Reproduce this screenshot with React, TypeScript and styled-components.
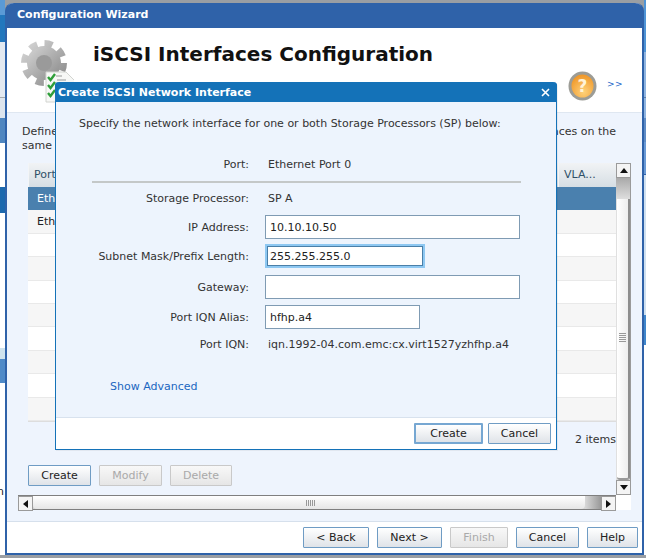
import React from 'react';
import styled, { createGlobalStyle } from 'styled-components';

const GlobalStyle = createGlobalStyle`
  html, body {
    margin: 0;
    padding: 0;
    background: #ffffff;
  }
  * {
    box-sizing: border-box;
  }
`;

const Page = styled.div`
  position: relative;
  width: 646px;
  height: 558px;
  overflow: hidden;
  display: flex;
  background: #9a9ea3;
  font-family: 'DejaVu Sans', Verdana, sans-serif;
  font-size: 11px;
  color: #333333;
`;

const Strip = styled.div<{ $width: number }>`
  width: ${(p) => p.$width}px;
  flex: none;
  height: 555px;
  display: flex;
  flex-direction: column;
  background: #ffffff;
`;

const StripBand = styled.div<{ $height: number; $color: string }>`
  height: ${(p) => p.$height}px;
  flex: none;
  background: ${(p) => p.$color};
  font-size: 11px;
  line-height: 12px;
  color: #222222;
  overflow: hidden;
  text-indent: -3px;
`;

const Wizard = styled.div`
  width: 639px;
  height: 552px;
  margin-top: 3px;
  flex: none;
  display: flex;
  flex-direction: column;
  background: #ffffff;
  border: 2px solid #2f62a9;
  border-top: none;
  border-radius: 8px 8px 0 0;
`;

const WizardTitle = styled.div`
  height: 25px;
  flex: none;
  margin: 0 -1px;
  padding: 0 11px 2px;
  display: flex;
  align-items: center;
  background: #2f62a9;
  color: #ffffff;
  font-weight: 700;
  border-radius: 8px 8px 0 0;
`;

const Header = styled.div`
  height: 84px;
  flex: none;
  display: flex;
  padding-left: 7px;
  position: relative;
`;

const GearIcon = styled.svg`
  width: 60px;
  height: 70px;
  margin-top: 10px;
  flex: none;
`;

const Heading = styled.h1`
  margin: 12px 0 0 19px;
  font-size: 20px;
  line-height: 28px;
  font-weight: 700;
  color: #111111;
  white-space: nowrap;
`;

const HelpArea = styled.div`
  margin-left: auto;
  padding: 43px 19px 0 0;
  display: flex;
  align-items: flex-start;
  gap: 10px;
`;

const HelpIcon = styled.svg`
  width: 29px;
  height: 30px;
  flex: none;
`;

const MoreLink = styled.span`
  margin-top: 8px;
  color: #1a66c8;
  font-size: 9px;
  letter-spacing: 0.5px;
`;

const Panel = styled.div`
  flex: 1;
  min-height: 0;
  display: flex;
  flex-direction: column;
  padding-left: 11px;
  background: #eef4fd;
  border-top: 1px solid #dfe7f1;
  border-bottom: 1px solid #d6e0ec;
`;

const Description = styled.div`
  height: 50px;
  width: 598px;
  padding: 12px 0 0 4px;
  line-height: 14px;
  white-space: nowrap;
`;

const DescriptionLine = styled.div`
  display: flex;
  justify-content: space-between;
`;

const ScrollFrame = styled.div`
  display: grid;
  grid-template-columns: 598px 15px;
  grid-template-rows: 332px 15px;
`;

const Viewport = styled.div`
  padding-left: 10px;
  display: flex;
  flex-direction: column;
`;

const Grid = styled.div`
  display: flex;
  flex-direction: column;
  border-bottom: 1px solid #dddddd;
`;

const HeaderRow = styled.div`
  height: 24px;
  display: flex;
  align-items: center;
  justify-content: space-between;
  background: linear-gradient(#f1f3f5, #d6dee4);
  color: #2f5068;
`;

const HeaderCell = styled.span<{ $width: number }>`
  width: ${(p) => p.$width}px;
  padding-left: 5px;
  line-height: 24px;
  border-left: 1px solid #f3f5f7;
  white-space: nowrap;
`;

const Row = styled.div<{ $selected?: boolean; $odd: boolean }>`
  height: 23.4px;
  padding-left: 9px;
  display: flex;
  align-items: center;
  background: ${(p) => (p.$selected ? '#4a80ae' : p.$odd ? '#f6f6f6' : '#ffffff')};
  color: ${(p) => (p.$selected ? '#ffffff' : '#222222')};
  border-bottom: 1px solid ${(p) => (p.$selected ? '#4a80ae' : '#e9e9e9')};
`;

const ItemCount = styled.div`
  height: 36px;
  display: flex;
  align-items: center;
  justify-content: flex-end;
  white-space: nowrap;
`;

const Actions = styled.div`
  margin-top: 7px;
  display: flex;
  gap: 8px;
`;

const Button = styled.button<{ $width: number; $focused?: boolean }>`
  width: ${(p) => p.$width}px;
  height: 21px;
  padding: 0;
  flex: none;
  font-family: inherit;
  font-size: 11px;
  color: #222222;
  background: linear-gradient(#ffffff, #dfe3e8);
  border: ${(p) => (p.$focused ? '2px solid #76a7d2' : '1px solid #6f9cc4')};
  border-radius: 1px;

  &:disabled {
    color: #a9a9a9;
    background: linear-gradient(#f8f8f8, #e6e6e6);
    border-color: #c9c9c9;
  }
`;

const VScroll = styled.div`
  display: flex;
  flex-direction: column;
  background: #d4d4d4;
  border-right: 1px solid #9a9a9a;
`;

const ArrowButton = styled.div`
  width: 15px;
  height: 15px;
  flex: none;
  display: flex;
  align-items: center;
  justify-content: center;
  background: #f4f4f4;
  border: 1px solid #9a9a9a;
`;

const VTrack = styled.div`
  flex: 1;
  padding-top: 21px;
  display: flex;
  flex-direction: column;
  background: linear-gradient(#a9a9a9, #e0e0e0 22px);
`;

const VThumb = styled.div`
  flex: 1;
  padding-top: 134px;
  margin-left: 1px;
  display: flex;
  flex-direction: column;
  align-items: center;
  gap: 1px;
  background: linear-gradient(90deg, #ffffff, #eeeeee);
  border-right: 2px solid #8d8d8d;
  border-bottom: 2px solid #9a9a9a;
  border-radius: 0 0 3px 3px;
`;

const GripH = styled.span`
  width: 7px;
  height: 1px;
  background: #999999;
`;

const HScroll = styled.div`
  display: flex;
  background: #d4d4d4;
  border-top: 1px solid #7f7f7f;
  border-bottom: 1px solid #7f7f7f;
`;

const HThumb = styled.div`
  width: 552px;
  flex: none;
  display: flex;
  align-items: center;
  justify-content: flex-end;
  gap: 1px;
  padding-right: 270px;
  background: linear-gradient(#ffffff, #e6e6e6);
  border-radius: 0 0 4px 4px;
`;

const GripV = styled.span`
  width: 1px;
  height: 6px;
  background: #999999;
`;

const HRest = styled.div`
  flex: 1;
  background: linear-gradient(90deg, #d8d8d8, #999999);
`;

const Corner = styled.div`
  background: #ffffff;
`;

const WizardFooter = styled.div`
  height: 31px;
  flex: none;
  display: flex;
  justify-content: flex-end;
  align-items: flex-start;
  gap: 8px;
  padding: 5px 4px 0 0;
`;

const Dialog = styled.div`
  position: absolute;
  left: 55px;
  top: 82px;
  width: 502px;
  height: 368px;
  display: flex;
  flex-direction: column;
  background: #ffffff;
  border: 1px solid #1472b8;
  border-top: none;
  border-radius: 4px 4px 0 0;
  box-shadow: 1px 1px 0 rgba(0, 0, 0, 0.05);
`;

const DialogTitle = styled.div`
  height: 20px;
  flex: none;
  margin: 0 -1px;
  padding: 0 7px 0 3px;
  display: flex;
  align-items: center;
  justify-content: space-between;
  background: #1472b8;
  color: #ffffff;
  font-weight: 700;
  border-radius: 4px 4px 0 0;
`;

const DialogBody = styled.div`
  flex: 1;
  padding-top: 13px;
  display: flex;
  flex-direction: column;
  background: #edf4fd;
  border-bottom: 1px solid #d8e2ee;
`;

const Intro = styled.div`
  height: 18px;
  padding-left: 23px;
  line-height: 18px;
`;

const Divider = styled.div`
  height: 2px;
  width: 429px;
  margin: 8px 0 7px 36px;
  background: #c4c8c8;
`;

const FormRow = styled.div<{ $height: number; $top?: number }>`
  height: ${(p) => p.$height}px;
  margin-top: ${(p) => p.$top ?? 0}px;
  display: flex;
  align-items: center;
`;

const Label = styled.span`
  width: 193px;
  flex: none;
  text-align: right;
  white-space: nowrap;
`;

const Value = styled.span`
  margin-left: 19px;
  white-space: nowrap;
`;

const Field = styled.div<{ $width: number; $focused?: boolean }>`
  width: ${(p) => p.$width}px;
  height: 24px;
  margin-left: 16px;
  padding-left: ${(p) => (p.$focused ? 3 : 4)}px;
  display: flex;
  align-items: center;
  background: #ffffff;
  color: #222222;
  border: ${(p) => (p.$focused ? '2px solid #8ec8f2' : '1px solid #7f9bb3')};
  outline: ${(p) => (p.$focused ? '1px solid #4a7fa8' : 'none')};
  outline-offset: -3px;
`;

const AdvancedLink = styled.a`
  margin: 28px 0 0 54px;
  color: #1a66c0;
  line-height: 14px;
`;

const DialogFooter = styled.div`
  height: 31px;
  flex: none;
  display: flex;
  justify-content: flex-end;
  gap: 5px;
  padding: 5px 5px 0 0;
`;

const Gear = () => (
  <GearIcon viewBox="0 0 60 70">
    <defs>
      <linearGradient id="gearFill" x1="0" y1="0" x2="1" y2="1">
        <stop offset="0" stopColor="#d6d6d6" />
        <stop offset="1" stopColor="#8a8a8a" />
      </linearGradient>
    </defs>
    <circle cx="30" cy="25" r="17" fill="url(#gearFill)" />
    <circle cx="30" cy="25" r="19.5" fill="none" stroke="url(#gearFill)" strokeWidth="7" strokeDasharray="8 7.3" />
    <circle cx="30" cy="25" r="8" fill="#9a9a9a" />
    <path d="M32 34 H52 L61 43 V64 H32 Z" fill="#f7f8f6" stroke="#d2d4d0" />
    <path d="M42 38 H48 M43 42 H52" stroke="#9a9a9a" strokeWidth="1.2" />
    <path d="M34 39 L36.5 42 L41 36 M34 47 L36.5 50 L41 44 M34 55 L36.5 58 L41 52" fill="none" stroke="#2f9e3a" strokeWidth="2.4" />
  </GearIcon>
);

const HelpBadge = () => (
  <HelpIcon viewBox="0 0 29 30">
    <defs>
      <radialGradient id="helpFill" cx="0.55" cy="0.75" r="0.8">
        <stop offset="0" stopColor="#ffd27a" />
        <stop offset="1" stopColor="#ee9222" />
      </radialGradient>
    </defs>
    <ellipse cx="14.5" cy="15" rx="14" ry="14.5" fill="#9c9c96" />
    <ellipse cx="14.5" cy="15" rx="11" ry="11.5" fill="url(#helpFill)" />
    <text x="14.5" y="21" textAnchor="middle" fontSize="17" fontWeight="700" fill="#fff3d8" fontFamily="'DejaVu Sans', sans-serif">
      ?
    </text>
  </HelpIcon>
);

const Arrow = ({ dir }: { dir: 'up' | 'down' | 'left' | 'right' }) => {
  const points = {
    up: '4,1 8,6 0,6',
    down: '0,1 8,1 4,6',
    left: '6,0 6,8 1,4',
    right: '1,0 6,4 1,8',
  }[dir];
  return (
    <svg width="8" height="8" viewBox="0 0 8 8">
      <polygon points={points} fill="#111111" />
    </svg>
  );
};

const leftBands: [number, string][] = [
  [15, '#5a9ad6'],
  [27, '#2277bd'],
  [55, '#e3e9f1'],
  [1, '#a5a9ad'],
  [20, '#dde5ee'],
  [25, '#4f86c0'],
  [44, '#ffffff'],
  [26, '#1c69ae'],
  [135, '#ffffff'],
  [11, '#cfe3ee'],
  [24, '#4f8ac8'],
];

const rightBands: [number, string][] = [
  [52, '#4f94d6'],
  [45, '#8fb4e0'],
  [1, '#5e7fa8'],
  [20, '#8fb4e0'],
  [24, '#5f8cc6'],
  [32, '#6a9ad6'],
  [1, '#2f62a9'],
  [140, '#cfe0f0'],
  [30, '#3f86cc'],
  [210, '#ffffff'],
];

const rowCount = 10;

const App = () => {
  return (
    <>
      <GlobalStyle />
      <Page>
        <Strip $width={5}>
          {leftBands.map(([height, color], idx) => (
            <StripBand key={`l${idx}`} $height={height} $color={color} />
          ))}
          <StripBand $height={103} $color="#ffffff" />
          <StripBand $height={14} $color="#ffffff">
            n
          </StripBand>
        </Strip>
        <Wizard>
          <WizardTitle>Configuration Wizard</WizardTitle>
          <Header>
            <Gear />
            <Heading>iSCSI Interfaces Configuration</Heading>
            <HelpArea>
              <HelpBadge />
              <MoreLink>&gt;&gt;</MoreLink>
            </HelpArea>
          </Header>
          <Panel>
            <Description>
              <DescriptionLine>
                <span>Define iSCSI network interfaces.</span>
                <span>Configure interfaces on the</span>
              </DescriptionLine>
              same subnet.
            </Description>
            <ScrollFrame>
              <Viewport>
                <Grid>
                  <HeaderRow>
                    <HeaderCell $width={200}>Port</HeaderCell>
                    <HeaderCell $width={58}>VLA...</HeaderCell>
                  </HeaderRow>
                  {Array.from({ length: rowCount }).map((_, idx) => (
                    <Row key={`row${idx}`} $selected={idx === 0} $odd={idx % 2 === 1}>
                      {idx === 0 && 'Ethernet Port 0'}
                      {idx === 1 && 'Ethernet Port 1'}
                    </Row>
                  ))}
                </Grid>
                <ItemCount>2 items</ItemCount>
                <Actions>
                  <Button $width={63}>Create</Button>
                  <Button $width={63} disabled>
                    Modify
                  </Button>
                  <Button $width={62} disabled>
                    Delete
                  </Button>
                </Actions>
              </Viewport>
              <VScroll>
                <ArrowButton>
                  <Arrow dir="up" />
                </ArrowButton>
                <VTrack>
                  <VThumb>
                    <GripH />
                    <GripH />
                    <GripH />
                    <GripH />
                    <GripH />
                  </VThumb>
                </VTrack>
                <ArrowButton>
                  <Arrow dir="down" />
                </ArrowButton>
              </VScroll>
              <HScroll>
                <ArrowButton>
                  <Arrow dir="left" />
                </ArrowButton>
                <HThumb>
                  <GripV />
                  <GripV />
                  <GripV />
                  <GripV />
                  <GripV />
                </HThumb>
                <HRest />
                <ArrowButton>
                  <Arrow dir="right" />
                </ArrowButton>
              </HScroll>
              <Corner />
            </ScrollFrame>
          </Panel>
          <WizardFooter>
            <Button $width={66}>&lt; Back</Button>
            <Button $width={65}>Next &gt;</Button>
            <Button $width={58} disabled>
              Finish
            </Button>
            <Button $width={63}>Cancel</Button>
            <Button $width={51}>Help</Button>
          </WizardFooter>
        </Wizard>
        <Strip $width={2}>
          {rightBands.map(([height, color], idx) => (
            <StripBand key={`r${idx}`} $height={height} $color={color} />
          ))}
        </Strip>
        <Dialog>
          <DialogTitle>
            <span>Create iSCSI Network Interface</span>
            <svg width="9" height="9" viewBox="0 0 9 9">
              <path d="M1 1 L8 8 M8 1 L1 8" stroke="#ffffff" strokeWidth="1.6" />
            </svg>
          </DialogTitle>
          <DialogBody>
            <Intro>Specify the network interface for one or both Storage Processors (SP) below:</Intro>
            <FormRow $height={18} $top={22}>
              <Label>Port:</Label>
              <Value>Ethernet Port 0</Value>
            </FormRow>
            <Divider />
            <FormRow $height={16}>
              <Label>Storage Processor:</Label>
              <Value>SP A</Value>
            </FormRow>
            <FormRow $height={24} $top={9}>
              <Label>IP Address:</Label>
              <Field $width={255}>10.10.10.50</Field>
            </FormRow>
            <FormRow $height={24} $top={5}>
              <Label>Subnet Mask/Prefix Length:</Label>
              <Field $width={160} $focused>
                255.255.255.0
              </Field>
            </FormRow>
            <FormRow $height={24} $top={7}>
              <Label>Gateway:</Label>
              <Field $width={255} />
            </FormRow>
            <FormRow $height={24} $top={6}>
              <Label>Port IQN Alias:</Label>
              <Field $width={155}>hfhp.a4</Field>
            </FormRow>
            <FormRow $height={16} $top={7}>
              <Label>Port IQN:</Label>
              <Value>iqn.1992-04.com.emc:cx.virt1527yzhfhp.a4</Value>
            </FormRow>
            <AdvancedLink>Show Advanced</AdvancedLink>
          </DialogBody>
          <DialogFooter>
            <Button $width={69} $focused>
              Create
            </Button>
            <Button $width={63}>Cancel</Button>
          </DialogFooter>
        </Dialog>
      </Page>
    </>
  );
};

export default App;
